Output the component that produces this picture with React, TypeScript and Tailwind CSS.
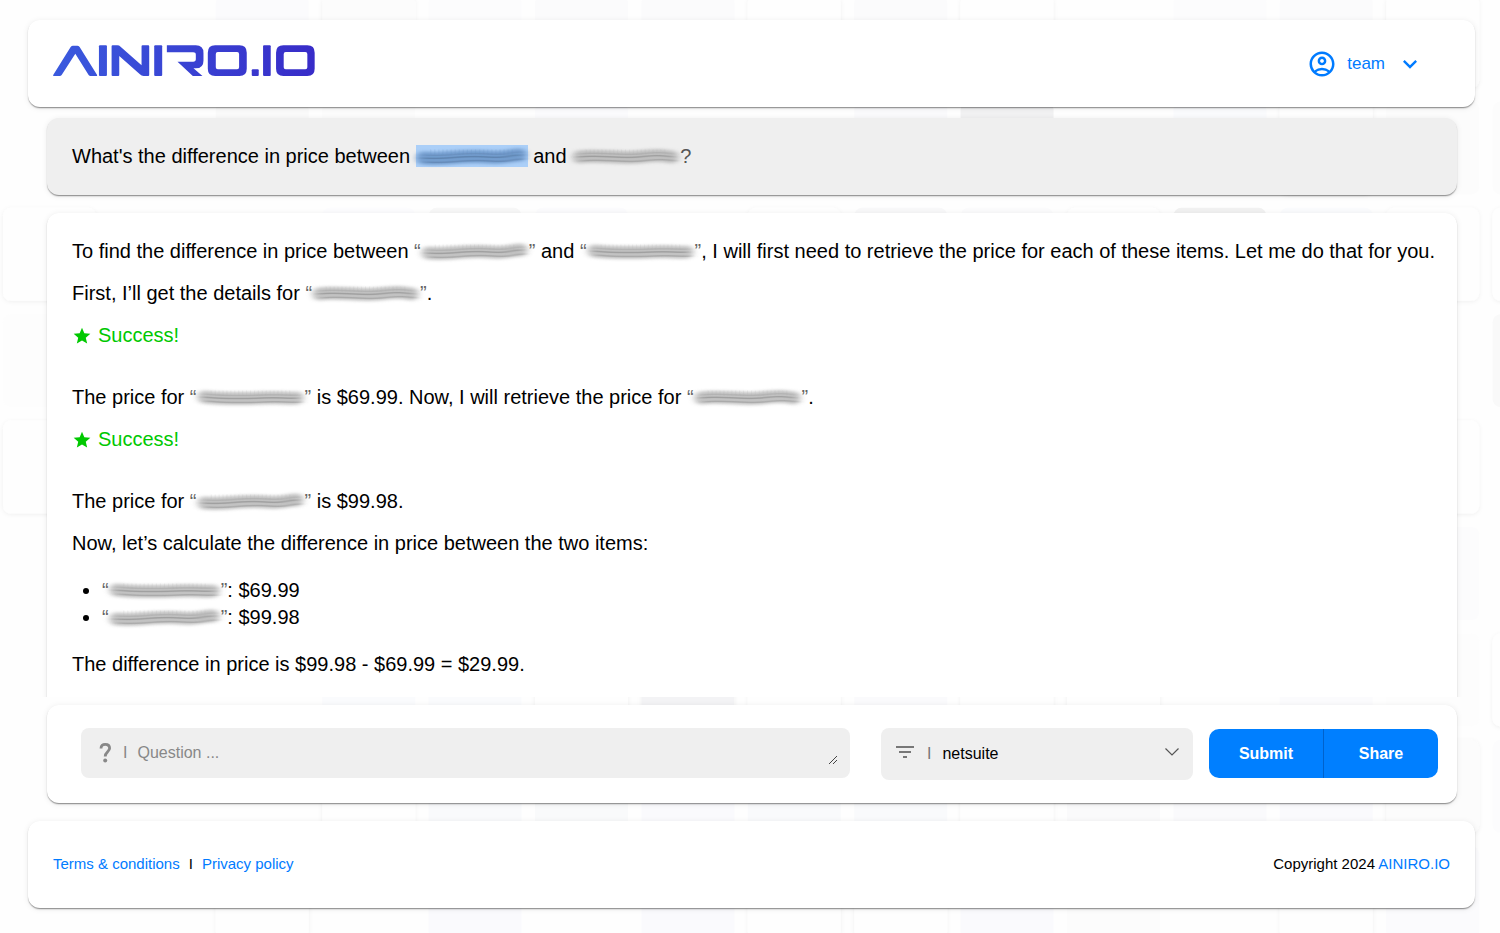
import React, { useState } from 'react';
import { MdExpandMore, MdFilterList, MdOutlineAccountCircle, MdStar } from 'react-icons/md';

type Tile = { col: number; row: number; fill: string; raised?: boolean };

const TILES: Tile[] = [
  { col: 2, row: 0, fill: '#fbfbfd' },
  { col: 3, row: 0, fill: '#fcfcfc', raised: true },
  { col: 4, row: 0, fill: '#fcfcfd' },
  { col: 5, row: 0, fill: '#fbfbfc' },
  { col: 6, row: 0, fill: '#fbfbfc' },
  { col: 7, row: 0, fill: '#fefefe', raised: true },
  { col: 8, row: 0, fill: '#fbfbfc' },
  { col: 9, row: 0, fill: '#fefefe', raised: true },
  { col: 11, row: 0, fill: '#fcfcfd' },
  { col: 12, row: 0, fill: '#fbfbfc' },
  { col: 13, row: 0, fill: '#fefefe', raised: true },
  { col: 2, row: 1, fill: '#fafafa' },
  { col: 3, row: 1, fill: '#fcfcfc' },
  { col: 5, row: 1, fill: '#fbfbfd' },
  { col: 8, row: 1, fill: '#fafafc' },
  { col: 9, row: 1, fill: '#f1f1f2' },
  { col: 11, row: 1, fill: '#fafbfd' },
  { col: 12, row: 1, fill: '#fefefe', raised: true },
  { col: 13, row: 1, fill: '#fcfcfc' },
  { col: 14, row: 1, fill: '#fcfcfc' },
  { col: 0, row: 2, fill: '#fefefe', raised: true },
  { col: 3, row: 2, fill: '#fcfcfe' },
  { col: 4, row: 2, fill: '#f7f7f7' },
  { col: 5, row: 2, fill: '#fbfbfd' },
  { col: 7, row: 2, fill: '#fefefe', raised: true },
  { col: 8, row: 2, fill: '#f8f8f9' },
  { col: 9, row: 2, fill: '#fbfbfc' },
  { col: 10, row: 2, fill: '#fefefe', raised: true },
  { col: 11, row: 2, fill: '#f1f1f1' },
  { col: 12, row: 2, fill: '#fafbfd' },
  { col: 13, row: 2, fill: '#fefefe', raised: true },
  { col: 14, row: 2, fill: '#fefefe', raised: true },
  { col: 0, row: 3, fill: '#fdfdfd' },
  { col: 14, row: 3, fill: '#f9f9f9' },
  { col: 0, row: 4, fill: '#fefefe', raised: true },
  { col: 13, row: 4, fill: '#fefefe', raised: true },
  { col: 13, row: 5, fill: '#fcfcfd' },
  { col: 4, row: 6, fill: '#fafbfd' },
  { col: 3, row: 6, fill: '#fafbfd' },
  { col: 5, row: 6, fill: '#fefefe', raised: true },
  { col: 6, row: 6, fill: '#f3f3f5', raised: true },
  { col: 7, row: 6, fill: '#fefefe', raised: true },
  { col: 8, row: 6, fill: '#fafafc' },
  { col: 9, row: 6, fill: '#fefefe', raised: true },
  { col: 10, row: 6, fill: '#fefefe', raised: true },
  { col: 12, row: 6, fill: '#fbfbfd' },
  { col: 13, row: 6, fill: '#fdfdfd' },
  { col: 14, row: 6, fill: '#fefefe', raised: true },
  { col: 3, row: 7, fill: '#fefefe', raised: true },
  { col: 4, row: 7, fill: '#f9fafc' },
  { col: 5, row: 7, fill: '#f9fafb' },
  { col: 6, row: 7, fill: '#fafafd' },
  { col: 7, row: 7, fill: '#f9fafc' },
  { col: 8, row: 7, fill: '#f9fafc' },
  { col: 9, row: 7, fill: '#fefefe', raised: true },
  { col: 10, row: 7, fill: '#fafafb' },
  { col: 11, row: 7, fill: '#fafafc' },
  { col: 12, row: 7, fill: '#fafafd' },
  { col: 13, row: 7, fill: '#fcfcfc', raised: true },
  { col: 14, row: 7, fill: '#fcfcfd' },
  { col: 2, row: 8, fill: '#fefefe', raised: true },
  { col: 4, row: 8, fill: '#fafafd' },
  { col: 6, row: 8, fill: '#fafafd' },
  { col: 7, row: 8, fill: '#fefefe', raised: true },
  { col: 8, row: 8, fill: '#fefefe', raised: true },
  { col: 9, row: 8, fill: '#fafafd' },
  { col: 10, row: 8, fill: '#fcfcfc' },
  { col: 12, row: 8, fill: '#fefefe', raised: true },
  { col: 13, row: 8, fill: '#fbfbfd' },
];

const TILE_PITCH = 106.4;

const Backdrop: React.FC = () => (
  <svg className="absolute inset-0 -z-10 h-full w-full" aria-hidden>
    <defs>
      <filter id="tile-shadow" x="-20%" y="-20%" width="140%" height="140%">
        <feDropShadow dx="0" dy="1" stdDeviation="2" floodColor="#000" floodOpacity="0.06" />
      </filter>
    </defs>
    {TILES.map((t) => (
      <rect
        key={`${t.col}-${t.row}`}
        x={3 + t.col * TILE_PITCH}
        y={-5 + t.row * TILE_PITCH}
        width="93"
        height="93"
        rx="8"
        fill={t.fill}
        filter={t.raised ? 'url(#tile-shadow)' : undefined}
      />
    ))}
  </svg>
);

const Logo: React.FC = () => (
  <svg viewBox="99 135 787 93" className="h-[31px] w-[262px]" role="img" aria-label="AINIRO.IO">
    <defs>
      <linearGradient id="logo-fill" gradientUnits="userSpaceOnUse" x1="99" y1="180" x2="886" y2="180">
        <stop offset="0" stopColor="#3a5ade" />
        <stop offset="1" stopColor="#382cc8" />
      </linearGradient>
    </defs>
    <g fill="url(#logo-fill)" fillRule="evenodd">
      <path d="M102 228Q98 228 100 224L152 141Q155 137 159 137H172Q176 137 179 141L231 224Q233 228 229 228H212Q208 228 206 225L166 161 125 225Q123 228 119 228Z" />
      <rect x="237" y="136" width="24" height="92" rx="3" />
      <path d="M275 139Q275 136 278 136H292Q298 136 302 140L365 196V139Q365 136 368 136H385Q388 136 388 139V225Q388 228 385 228H371Q365 228 360 223L298 168V225Q298 228 295 228H278Q275 228 275 225Z" />
      <rect x="403" y="136" width="24" height="92" rx="3" />
      <path d="M441 136H528Q551 136 551 159V182Q551 205 528 205H521L548 228H519L473 185H520Q528 185 528 178V164Q528 157 520 157H441Z" />
      <path d="M586 136H659Q681 136 681 158V206Q681 228 659 228H586Q564 228 564 206V158Q564 136 586 136ZM594 156Q588 156 588 162V202Q588 208 594 208H652Q658 208 658 202V162Q658 156 652 156Z" />
      <rect x="696" y="208" width="21" height="20" rx="3" />
      <rect x="730" y="136" width="23" height="92" rx="3" />
      <path d="M791 136H863Q885 136 885 158V206Q885 228 863 228H791Q769 228 769 206V158Q769 136 791 136ZM798 156Q792 156 792 162V202Q792 208 798 208H857Q863 208 863 202V162Q863 156 857 156Z" />
    </g>
  </svg>
);

const QuestionIcon: React.FC = () => (
  <svg viewBox="0 0 24 24" className="h-6 w-6" fill="none" aria-hidden>
    <path
      d="M8 7.6C8 4.6 9.8 3.3 12.2 3.3C14.8 3.3 16.6 4.9 16.6 7.3C16.6 10.6 12.2 11 12.2 15.4"
      stroke="currentColor"
      strokeWidth="2.8"
    />
    <circle cx="12.2" cy="19.4" r="2" fill="currentColor" />
  </svg>
);

const STROKES = [
  'M7 13C26 15 48 10 70 12S94 9 102 10',
  'M7 11C26 13 44 13 66 12S90 13 102 12',
  'M7 12C24 9 48 14 68 12S88 10 102 12',
];

type RedactedProps = { variant?: number; selected?: boolean; wide?: boolean };

/** Hidden product name, smeared over with a brush. */
const Redacted: React.FC<RedactedProps> = ({ variant = 0, selected, wide }) => {
  const d = STROKES[variant];
  return (
    <span
      role="img"
      aria-label="redacted"
      className={`inline-block h-[22px] align-text-bottom ${wide ? 'w-[112px]' : 'w-[108px]'} ${selected ? 'bg-[#abcff8]' : ''}`}
    >
      <svg viewBox="0 0 110 22" preserveAspectRatio="none" className="h-full w-full overflow-visible">
        <defs>
          <filter id="smear-wide" filterUnits="userSpaceOnUse" x="-10" y="-10" width="130" height="42">
            <feGaussianBlur stdDeviation="3 1.8" />
          </filter>
          <filter id="smear-thin" filterUnits="userSpaceOnUse" x="-10" y="-10" width="130" height="42">
            <feGaussianBlur stdDeviation="4 0.7" />
          </filter>
        </defs>
        <g fill="none" strokeLinecap="round" stroke={selected ? '#6691c4' : '#b4b4b4'}>
          <path d={d} strokeWidth="13" opacity="0.8" filter="url(#smear-wide)" />
          <g strokeWidth="1.5" filter="url(#smear-thin)" stroke={selected ? '#44658c' : '#777'}>
            <path d={d} opacity="0.45" />
            <path d={d} transform="translate(3 4)" opacity="0.35" />
            <path d={d} transform="translate(1 -3)" opacity="0.2" />
          </g>
          <path
            d="M14 7H96"
            strokeWidth="5"
            strokeLinecap="butt"
            strokeDasharray="1 3"
            opacity="0.2"
          />
        </g>
      </svg>
    </span>
  );
};

const Quoted: React.FC<{ variant?: number; wide?: boolean }> = ({ variant, wide }) => (
  <>
    <span className="text-[#666]">“</span>
    <Redacted variant={variant} wide={wide} />
    <span className="text-[#666]">”</span>
  </>
);

const Success: React.FC = () => (
  <p className="mb-[35px] flex items-center gap-1.5 text-[#00c800]">
    <MdStar size={20} aria-hidden />
    Success!
  </p>
);

const CARD =
  'rounded-xl shadow-[0_1px_1px_rgba(0,0,0,0.25),0_2px_2px_-1px_rgba(0,0,0,0.25),0_1px_6px_rgba(0,0,0,0.08)]';

const App: React.FC = () => {
  const [question, setQuestion] = useState('');
  const [type, setType] = useState('netsuite');

  return (
    <div className="relative isolate flex h-screen flex-col overflow-hidden bg-[#fefefe] pt-5 pb-[25px] font-['Liberation_Sans',Arial,sans-serif] text-black">
      <Backdrop />

      <header
        className={`mr-[25px] ml-[28px] flex h-[87px] shrink-0 items-center justify-between bg-white pr-[51px] pl-[25px] ${CARD}`}
      >
        <a href="#home" className="mb-1.5">
          <Logo />
        </a>
        <button type="button" className="flex items-center text-[17px] text-[#007bff]">
          <MdOutlineAccountCircle size={30} aria-hidden />
          <span className="mr-[11px] ml-[10px]">team</span>
          <MdExpandMore size={28} aria-hidden />
        </button>
      </header>

      <main className="min-h-0 flex-1 overflow-y-auto pt-[11px] pr-[43px] pl-[47px] text-[20px] leading-[27px] [scrollbar-width:none]">
        <section className={`mb-[18px] bg-[#efefef] p-[25px] ${CARD}`}>
          <p>
            What's the difference in price between <Redacted selected wide /> and{' '}
            <Redacted variant={2} />
            <span className="text-[#555]">?</span>
          </p>
        </section>

        <section className={`bg-white py-[25px] pr-[10px] pl-[25px] ${CARD}`}>
          <p className="mb-[15px]">
            To find the difference in price between <Quoted /> and <Quoted variant={1} />, I will first
            need to retrieve the price for each of these items. Let me do that for you.
          </p>
          <p className="mb-[15px]">
            First, I’ll get the details for <Quoted variant={2} />.
          </p>
          <Success />
          <p className="mb-[15px]">
            The price for <Quoted variant={1} /> is $69.99. Now, I will retrieve the price for{' '}
            <Quoted variant={2} />.
          </p>
          <Success />
          <p className="mb-[15px]">
            The price for <Quoted /> is $99.98.
          </p>
          <p className="mb-5">Now, let’s calculate the difference in price between the two items:</p>
          <ul className="mb-5 list-disc pl-[30px]">
            <li>
              <Quoted variant={1} wide />: $69.99
            </li>
            <li>
              <Quoted wide />: $99.98
            </li>
          </ul>
          <p className="mb-[15px]">The difference in price is $99.98 - $69.99 = $29.99.</p>
        </section>
      </main>

      <form
        onSubmit={(e) => e.preventDefault()}
        className={`mt-2 mr-[43px] ml-[47px] flex h-[98px] shrink-0 items-start bg-white pt-[23px] pr-[19px] pl-[34px] text-[16px] ${CARD}`}
      >
        <div className="relative mr-[31px] flex h-[50px] min-w-0 flex-1 items-center rounded-lg bg-[#efefef] pl-3 text-[#888]">
          <label htmlFor="question" className="flex items-center" aria-label="Question">
            <QuestionIcon />
            <span className="mr-[10px] ml-[6px]">I</span>
          </label>
          <textarea
            id="question"
            rows={1}
            value={question}
            onChange={(e) => setQuestion(e.target.value)}
            placeholder="Question ..."
            className="h-6 min-w-0 flex-1 resize-none overflow-hidden bg-transparent leading-6 text-black outline-none placeholder:text-[#888]"
          />
          <svg
            viewBox="0 0 10 10"
            className="absolute right-3 bottom-[13px] h-[10px] w-[10px]"
            fill="none"
            stroke="#444"
            aria-hidden
          >
            <path d="M1 9 9 1M5 9 9 5" />
          </svg>
        </div>

        <div className="relative mr-4 flex h-[52px] w-[312px] items-center rounded-lg bg-[#efefef] pl-3 text-[#777]">
          <label htmlFor="type" className="flex items-center" aria-label="Type">
            <MdFilterList size={24} className="mb-1" aria-hidden />
            <span className="mr-[11px] ml-[10px]">I</span>
          </label>
          <select
            id="type"
            value={type}
            onChange={(e) => setType(e.target.value)}
            className="h-full min-w-0 flex-1 appearance-none bg-transparent text-black outline-none"
          >
            <option value="netsuite">netsuite</option>
          </select>
          <svg
            viewBox="0 0 14 8"
            className="pointer-events-none absolute top-5 right-[14px] h-2 w-[14px]"
            fill="none"
            stroke="#555"
            strokeWidth="1.2"
            aria-hidden
          >
            <path d="M.5.5 7 7 13.5.5" />
          </svg>
        </div>

        <div className="mt-px flex h-[49px] w-[229px] overflow-hidden rounded-[10px] bg-[#007fff] font-bold text-white">
          <button type="submit" className="flex-1 border-r border-[#0062cc]">
            Submit
          </button>
          <button type="button" className="flex-1">
            Share
          </button>
        </div>
      </form>

      <footer
        className={`mt-[18px] mr-[25px] ml-[28px] flex h-[87px] shrink-0 items-center justify-between bg-white px-[25px] text-[15px] ${CARD}`}
      >
        <nav className="flex gap-[9px]">
          <a href="#terms" className="text-[#007bff]">
            Terms &amp; conditions
          </a>
          <span>I</span>
          <a href="#privacy" className="text-[#007bff]">
            Privacy policy
          </a>
        </nav>
        <p>
          Copyright 2024{' '}
          <a href="#ainiro" className="text-[#007bff]">
            AINIRO.IO
          </a>
        </p>
      </footer>
    </div>
  );
};

export default App;
